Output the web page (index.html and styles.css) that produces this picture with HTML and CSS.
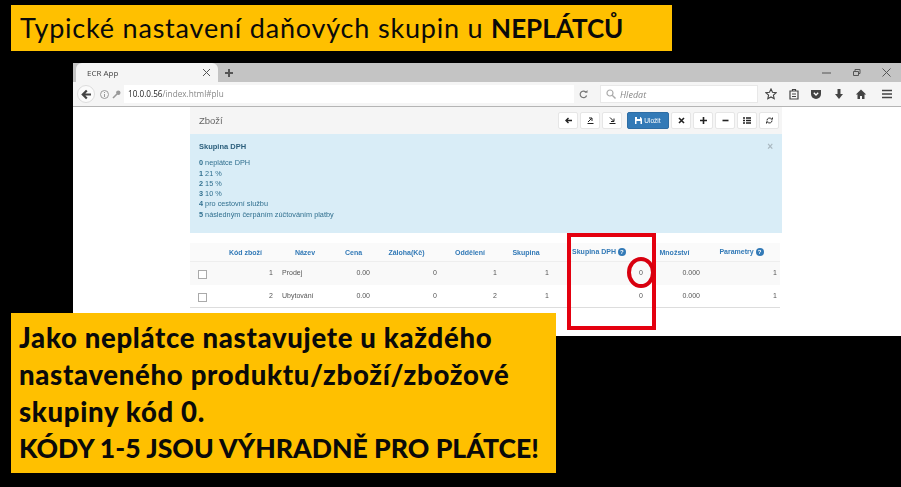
FILE: index.html
```html
<!DOCTYPE html>
<html lang="cs">

<head>
	<meta charset="utf-8">
	<title>Typické nastavení daňových skupin</title>
	<link rel="stylesheet" href="styles.css">
</head>

<body>
	<div class="callout callout-top">Typické nastavení daňových skupin u <b>NEPLÁTCŮ</b></div>

	<div class="browser">
		<div class="tabbar">
			<div class="tab">
				<span class="tab-title">ECR App</span>
				<svg class="tab-close" width="9" height="9" viewBox="0 0 9 9"><path d="M1 1l7 7M8 1L1 8" stroke="#555" stroke-width="1" /></svg>
			</div>
			<svg class="tab-new" width="10" height="10" viewBox="0 0 10 10"><path d="M5 1v8M1 5h8" stroke="#555" stroke-width="2" /></svg>
			<div class="win-controls">
				<svg width="9" height="9" viewBox="0 0 9 9"><path d="M0 5h9" stroke="#555" /></svg>
				<svg width="9" height="9" viewBox="0 0 9 9"><path d="M1.500 3.500h5v4h-5zM3 3.500V1.500h5v4H6.500" stroke="#555" fill="none" /></svg>
				<svg width="9" height="9" viewBox="0 0 9 9"><path d="M.5.5l8 8M8.500.5l-8 8" stroke="#555" /></svg>
			</div>
		</div>
		<div class="toolbar">
			<div class="back">
				<svg width="11" height="11" viewBox="0 0 11 11"><path d="M10 5.500H3M5.800 1.500l-4 4 4 4" stroke="#444" stroke-width="2.200" fill="none" /></svg>
			</div>
			<svg class="site-info" width="9" height="9" viewBox="0 0 9 9"><circle cx="4.500" cy="4.500" r="4" stroke="#999" fill="none" /><path d="M4.500 4v3M4.500 2v1" stroke="#999" /></svg>
			<svg class="site-key" width="9" height="9" viewBox="0 0 9 9"><circle cx="6.300" cy="2.700" r="2.200" fill="#999" /><path d="M5 4L1 8" stroke="#999" stroke-width="1.600" /></svg>
			<div class="url"><span class="url-host">10.0.0.56</span>/index.html#plu</div>
			<svg class="reload" width="9" height="9" viewBox="0 0 9 9"><path d="M7.600 5.500A3.300 3.300 0 1 1 6.800 2" stroke="#777" stroke-width="1.200" fill="none" /><path d="M5.500 2.800h3V0z" fill="#777" /></svg>
			<div class="search">
				<svg width="10" height="10" viewBox="0 0 10 10"><circle cx="4" cy="4" r="3" stroke="#aaa" stroke-width="1.200" fill="none" /><path d="M6.200 6.200L9.500 9.500" stroke="#aaa" stroke-width="1.400" /></svg>
				<i>Hledat</i>
			</div>
			<div class="nav-icons">
				<svg width="12" height="12" viewBox="0 0 12 12"><path d="M6 1l1.500 3.300 3.600.4-2.700 2.400.8 3.600L6 8.900l-3.200 1.800.8-3.600L.9 4.700l3.600-.4z" stroke="#444" stroke-width="1.100" fill="none" /></svg>
				<svg width="12" height="12" viewBox="0 0 12 12"><path d="M2 3h8v8H2zM4.500 3V1.500h3V3M4 6h4M4 8.500h4" stroke="#444" stroke-width="1.200" fill="none" /></svg>
				<svg width="12" height="12" viewBox="0 0 12 12"><path d="M1 2h10v4a5 5 0 0 1-10 0z" fill="#444" /><path d="M3.800 4.800L6 7l2.200-2.200" stroke="#fff" stroke-width="1.300" fill="none" /></svg>
				<svg width="12" height="12" viewBox="0 0 12 12"><path d="M6 1v6" stroke="#444" stroke-width="3" /><path d="M2 6h8l-4 5z" fill="#444" /></svg>
				<svg width="12" height="12" viewBox="0 0 12 12"><path d="M6 1.500L.8 6.500h1.700V11h2.500V8h2v3h2.500V6.500h1.700z" fill="#444" /></svg>
				<svg class="menu-icon" width="12" height="12" viewBox="0 0 12 12"><path d="M1 2.500h10M1 6h10M1 9.500h10" stroke="#444" stroke-width="1.700" /></svg>
			</div>
		</div>
		<div class="page">
			<div class="panel">
				<div class="panel-head">
					<span class="panel-title">Zboží</span>
					<div class="buttons">
						<span class="btn"><svg width="7" height="7" viewBox="0 0 7 7"><path d="M7 3.500H2M3.500 1L1 3.500 3.500 6" stroke="#222" stroke-width="1.400" fill="none" /></svg></span>
						<span class="btn"><svg width="7" height="7" viewBox="0 0 7 7"><path d="M.5 6.500h6" stroke="#222" /><path d="M1 5l3.500-3.500M2 1h3v3" stroke="#222" fill="none" /></svg></span>
						<span class="btn"><svg width="7" height="7" viewBox="0 0 7 7"><path d="M.5 6.500h6" stroke="#222" /><path d="M1 .5L4.500 4M2 4.500h3v-3" stroke="#222" fill="none" /></svg></span>
						<span class="btn btn-primary"><svg width="7" height="7" viewBox="0 0 7 7"><path d="M0 0h5.500L7 1.500V7H0z" fill="#fff" /><path d="M2 0h3v2H2zM1.500 4h4v3h-4z" fill="#337ab7" /></svg>Uložit</span>
						<span class="btn"><svg width="7" height="7" viewBox="0 0 7 7"><path d="M1 1l5 5M6 1L1 6" stroke="#222" stroke-width="1.600" /></svg></span>
						<span class="btn"><svg width="7" height="7" viewBox="0 0 7 7"><path d="M3.500 0v7M0 3.500h7" stroke="#222" stroke-width="1.600" /></svg></span>
						<span class="btn"><svg width="7" height="7" viewBox="0 0 7 7"><path d="M.5 3.500h6" stroke="#222" stroke-width="1.600" /></svg></span>
						<span class="btn"><svg width="8" height="7" viewBox="0 0 8 7"><path d="M0 1h2M0 3.500h2M0 6h2M3 1h5M3 3.500h5M3 6h5" stroke="#222" stroke-width="1.600" /></svg></span>
						<span class="btn"><svg width="7" height="7" viewBox="0 0 7 7"><path d="M1 3.500A2.500 2.500 0 0 1 5.500 2M6 3.500A2.500 2.500 0 0 1 1.500 5" stroke="#333" fill="none" /><path d="M4.500 2.500H7V0zM2.500 4.500H0V7z" fill="#333" /></svg></span>
					</div>
				</div>

				<div class="alert">
					<span class="alert-close">×</span>
					<div class="alert-title">Skupina DPH</div>
					<div><b>0</b> neplátce DPH</div>
					<div><b>1</b> 21 %</div>
					<div><b>2</b> 15 %</div>
					<div><b>3</b> 10 %</div>
					<div><b>4</b> pro cestovní službu</div>
					<div><b>5</b> následným čerpáním zúčtováním platby</div>
				</div>

				<table class="plu">
					<colgroup>
						<col class="c-check">
						<col class="c-code">
						<col class="c-name">
						<col class="c-price">
						<col class="c-deposit">
						<col class="c-dept">
						<col class="c-group">
						<col class="c-vat">
						<col class="c-qty">
						<col class="c-params">
					</colgroup>
					<thead>
						<tr>
							<th></th>
							<th>Kód zboží</th>
							<th>Název</th>
							<th>Cena</th>
							<th>Záloha(Kč)</th>
							<th>Oddělení</th>
							<th>Skupina</th>
							<th>Skupina DPH <span class="help">?</span></th>
							<th>Množství</th>
							<th>Parametry <span class="help">?</span></th>
						</tr>
					</thead>
					<tbody>
						<tr class="odd">
							<td><span class="check"></span></td>
							<td>1</td>
							<td class="left">Prodej</td>
							<td>0.00</td>
							<td>0</td>
							<td>1</td>
							<td>1</td>
							<td>0</td>
							<td>0.000</td>
							<td>1</td>
						</tr>
						<tr>
							<td><span class="check"></span></td>
							<td>2</td>
							<td class="left">Ubytování</td>
							<td>0.00</td>
							<td>0</td>
							<td>2</td>
							<td>1</td>
							<td>0</td>
							<td>0.000</td>
							<td>1</td>
						</tr>
					</tbody>
				</table>
			</div>
		</div>
	</div>

	<div class="mark-rect"></div>
	<div class="mark-circle"></div>

	<div class="callout callout-bottom">
		<div class="callout-line">Jako neplátce nastavujete u každého</div>
		<div class="callout-line">nastaveného produktu/zboží/zbožové</div>
		<div class="callout-line">skupiny kód 0.</div>
		<div class="callout-caps">KÓDY 1-5 JSOU VÝHRADNĚ PRO PLÁTCE!</div>
	</div>
</body>

</html>
```

FILE: styles.css
```css
html,
body {
	margin: 0;
	padding: 0;
	height: 100%;
}

body {
	position: relative;
	width: 901px;
	height: 487px;
	overflow: hidden;
	background: #000;
	font-family: "Liberation Sans", Arial, sans-serif;
}

/* yellow slide captions */
.callout {
	position: absolute;
	box-sizing: border-box;
	background: #ffc000;
	color: #0a0a0a;
	font-family: Lato, "Open Sans", sans-serif;
	z-index: 3;
}

.callout-top {
	top: 5px;
	left: 11px;
	width: 661px;
	height: 46px;
	padding-left: 9px;
	font-size: 27px;
	letter-spacing: 0.8px;
	line-height: 46px;
	white-space: nowrap;
}

.callout-top b {
	font-size: 26px;
	letter-spacing: 0;
}

.callout-bottom {
	top: 313px;
	left: 11px;
	width: 545px;
	height: 160px;
	padding: 6px 0 0 8px;
	font-weight: 900;
	line-height: 37px;
	white-space: nowrap;
}

.callout-line {
	font-size: 27.5px;
	letter-spacing: 0.7px;
}

.callout-caps {
	font-size: 26.6px;
}

/* red marks over the table */
.mark-rect {
	position: absolute;
	top: 233px;
	left: 567px;
	width: 81px;
	height: 89px;
	border: 4px solid #e4000f;
	z-index: 2;
}

.mark-circle {
	position: absolute;
	top: 257px;
	left: 627px;
	width: 20px;
	height: 23px;
	border: 4px solid #d8000f;
	border-radius: 50%;
	z-index: 2;
}

/* browser window, a little soft like the scaled photo of it */
.browser {
	position: absolute;
	top: 63px;
	left: 73px;
	width: 828px;
	height: 273px;
	background: #fff;
	display: flex;
	flex-direction: column;
	filter: blur(0.35px);
}

.tabbar {
	height: 19px;
	background: #c4c4c4;
	display: flex;
	align-items: center;
}

.tab {
	box-sizing: border-box;
	width: 142px;
	height: 19px;
	margin-left: 3px;
	padding: 0 7px 0 11px;
	background: #f5f5f5;
	border-radius: 6px 6px 0 0;
	display: flex;
	align-items: center;
	justify-content: space-between;
}

.tab-title {
	font-family: "Open Sans", sans-serif;
	font-size: 8px;
	color: #444;
}

.tab-new {
	margin-left: 6px;
}

.win-controls {
	margin-left: auto;
	display: flex;
	gap: 21px;
	padding-right: 10px;
}

.toolbar {
	box-sizing: border-box;
	height: 25px;
	background: #f5f5f5;
	border-bottom: 1px solid #b5b5b5;
	display: flex;
	align-items: center;
	padding-left: 4px;
}

.back {
	width: 18px;
	height: 18px;
	border-radius: 50%;
	background: #fbfbfb;
	border: 1px solid #ddd;
	box-sizing: border-box;
	display: flex;
	align-items: center;
	justify-content: center;
}

.site-info {
	margin-left: 5px;
}

.site-key {
	margin-left: 3px;
}

.url {
	margin-left: 3px;
	padding-left: 4px;
	width: 450px;
	box-sizing: border-box;
	font-family: "Open Sans", sans-serif;
	font-size: 8.2px;
	color: #888;
	background: #fff;
	line-height: 18px;
}

.url-host {
	color: #222;
}

.reload {
	margin-left: 5px;
}

.search {
	box-sizing: border-box;
	margin-left: 12px;
	width: 158px;
	height: 18px;
	padding-left: 5px;
	background: #fff;
	border: 1px solid #e8e8e8;
	display: flex;
	align-items: center;
	gap: 4px;
	font-family: "Open Sans", sans-serif;
	font-size: 9px;
	color: #888;
}

.nav-icons {
	margin-left: 7px;
	display: flex;
	gap: 10.5px;
}

.menu-icon {
	margin-left: 3px;
}

/* page */
.page {
	flex: 1;
	padding-left: 117px;
}

.panel {
	width: 592px;
}

.panel-head {
	height: 27px;
	background: #f5f5f5;
	display: flex;
	align-items: center;
	justify-content: space-between;
	padding: 0 3px 0 9px;
	box-sizing: border-box;
}

.panel-title {
	font-size: 9.5px;
	color: #666;
}

.buttons {
	display: flex;
	gap: 2px;
	align-items: center;
}

.btn {
	box-sizing: border-box;
	height: 17px;
	width: 20px;
	background: #fff;
	border: 1px solid #e6e6e6;
	border-radius: 2px;
	display: flex;
	align-items: center;
	justify-content: center;
}

.btn-primary {
	width: 42px;
	margin-left: 3px;
	gap: 2px;
	background: #337ab7;
	border-color: #2e6da4;
	color: #fff;
	font-size: 6.5px;
}

.alert {
	position: relative;
	box-sizing: border-box;
	height: 99px;
	padding: 8px 9px 0;
	background: #d9edf7;
	color: #31708f;
	font-size: 7.3px;
	line-height: 10.3px;
}

.alert-title {
	font-weight: bold;
	font-size: 7.5px;
	margin-bottom: 6px;
	color: #2c5f7c;
}

.alert-close {
	position: absolute;
	top: 8px;
	right: 9px;
	font-size: 10px;
	font-weight: bold;
	color: #a9b8c0;
}

.plu {
	table-layout: fixed;
	border-collapse: collapse;
	width: 590px;
	margin-top: 10px;
	font-size: 7px;
	color: #555;
}

.c-check { width: 25px; }
.c-code { width: 61px; }
.c-name { width: 58px; }
.c-price { width: 39px; }
.c-deposit { width: 67px; }
.c-dept { width: 60px; }
.c-group { width: 52px; }
.c-vat { width: 94px; }
.c-qty { width: 57px; }
.c-params { width: 77px; }

.plu th {
	height: 18px;
	padding: 0;
	background: #fafafa;
	border-bottom: 1px solid #eee;
	color: #337ab7;
	font-weight: bold;
	text-align: center;
	white-space: nowrap;
}

.plu td {
	height: 20px;
	padding: 0 3px 2px 0;
	text-align: right;
	border-bottom: 1px solid #ddd;
}

.plu tbody tr.odd td {
	background: #f9f9f9;
	border-bottom: 0;
	height: 21px;
}

.plu td.left {
	text-align: left;
	padding-left: 6px;
}

.plu td:first-child {
	text-align: left;
	padding: 2px 0 0 8px;
}

.check {
	display: block;
	box-sizing: border-box;
	width: 9px;
	height: 9px;
	background: #fff;
	border: 1px solid #aaa;
}

.help {
	display: inline-block;
	width: 8px;
	height: 8px;
	border-radius: 50%;
	background: #337ab7;
	color: #fff;
	font-size: 6px;
	line-height: 8px;
	text-align: center;
}
```
